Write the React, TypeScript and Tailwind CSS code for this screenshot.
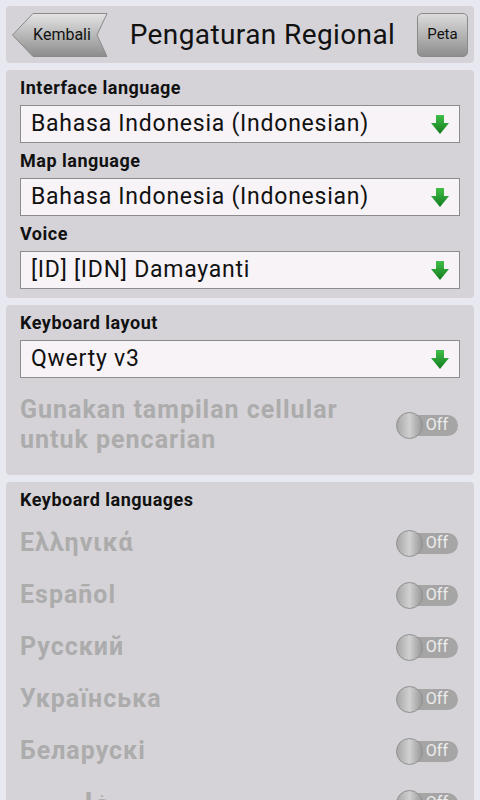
import React from 'react'

const font = { fontFamily: 'Roboto, "Noto Sans", "DejaVu Sans", sans-serif' }

function DownArrow() {
  return (
    <svg width="18" height="19" viewBox="0 0 18 19">
      <defs>
        <linearGradient id="ga" x1="0" y1="0" x2="0" y2="1">
          <stop offset="0" stopColor="#3fbf48" />
          <stop offset="1" stopColor="#137a1f" />
        </linearGradient>
      </defs>
      <path d="M5 0 H13 V8 H18 L9 19 L0 8 H5 Z" fill="url(#ga)" />
    </svg>
  )
}

function Select({ value }: { value: string }) {
  return (
    <div className="h-[38px] bg-[#f7f3f7] border border-[#8c8c8c] flex items-center justify-between pl-[10px] pr-[10px]">
      <span className="text-[23px] leading-[36px] tracking-[0.75px] text-[#111]">{value}</span>
      <DownArrow />
    </div>
  )
}

function Toggle() {
  return (
    <div className="relative w-[62px] h-[27px] shrink-0 mr-[2px]">
      <div className="absolute left-[6px] right-0 top-[3px] h-[21px] rounded-full bg-[#a5a5a5] flex items-center justify-end pr-[10px] text-[16px] text-[#ededed]">
        Off
      </div>
      <div className="absolute left-0 top-0 w-[27px] h-[27px] rounded-full border border-[#8f8f8f] bg-linear-to-r from-[#a8a8a8] via-[#d0d0d0] to-[#9a9a9a]" />
    </div>
  )
}

function Label({ children }: { children: React.ReactNode }) {
  return <div className="text-[18px] leading-[20px] tracking-[0.5px] font-bold text-[#111] mb-[7px]">{children}</div>
}

function Group({ label, value, last }: { label: string; value: string; last?: boolean }) {
  return (
    <div className={last ? '' : 'mb-[8px]'}>
      <Label>{label}</Label>
      <Select value={value} />
    </div>
  )
}

const langs = ['Ελληνικά', 'Español', 'Русский', 'Українська', 'Беларускі', 'فارسی']

export default function App() {
  return (
    <div style={font} className="w-[480px] h-[800px] overflow-hidden bg-[#e8e8f0] px-[6px] pt-[6px] flex flex-col gap-[7px]">
      <header className="h-[57px] shrink-0 rounded-[4px] bg-[#d5d3d7] flex items-center px-[6px]">
        <button className="relative w-[96px] h-[44px] shrink-0 flex items-center justify-center pl-[4px]">
          <svg className="absolute inset-0" width="96" height="44" viewBox="0 0 96 44">
            <defs>
              <linearGradient id="gb" x1="0" y1="0" x2="0" y2="1">
                <stop offset="0" stopColor="#e4e4e4" />
                <stop offset="1" stopColor="#8c8c8c" />
              </linearGradient>
            </defs>
            <path d="M21 0.5 H95 L85 22 L95 43.5 H21 L0.5 22 Z" fill="url(#gb)" stroke="#8a8a8a" />
          </svg>
          <span className="relative text-[16px] text-[#111]">Kembali</span>
        </button>
        <h1 className="flex-1 text-center text-[28px] leading-[34px] tracking-[0.4px] text-[#111]">Pengaturan Regional</h1>
        <button className="w-[51px] h-[44px] shrink-0 rounded-[5px] border border-[#8a8a8a] bg-linear-to-b from-[#dcdcdc] to-[#8e8e8e] text-[15px] text-[#111] flex items-center justify-center">
          Peta
        </button>
      </header>

      <section className="shrink-0 rounded-[4px] bg-[#d5d3d7] px-[14px] pt-[8px] pb-[9px]">
        <Group label="Interface language" value="Bahasa Indonesia (Indonesian)" />
        <Group label="Map language" value="Bahasa Indonesia (Indonesian)" />
        <Group label="Voice" value="[ID] [IDN] Damayanti" last />
      </section>

      <section className="shrink-0 rounded-[4px] bg-[#d5d3d7] px-[14px] pt-[8px] pb-[20px]">
        <Group label="Keyboard layout" value="Qwerty v3" last />
        <div className="mt-[17px] flex items-center justify-between">
          <div className="text-[25px] leading-[30px] tracking-[1px] font-bold text-[#acacac]">
            Gunakan tampilan cellular
            <br />
            untuk pencarian
          </div>
          <Toggle />
        </div>
      </section>

      <section className="shrink-0 rounded-t-[4px] bg-[#d5d3d7] px-[14px] pt-[8px]">
        <Label>Keyboard languages</Label>
        {langs.map((l) => (
          <div key={l} className="h-[52px] flex items-center justify-between">
            <span className="text-[25px] tracking-[1px] font-bold text-[#acacac]">{l}</span>
            <Toggle />
          </div>
        ))}
      </section>
    </div>
  )
}
